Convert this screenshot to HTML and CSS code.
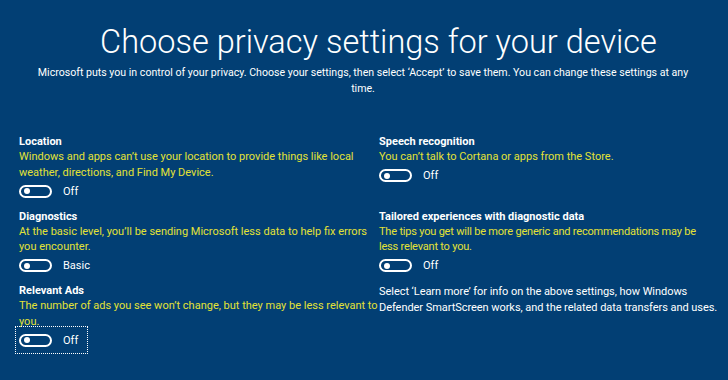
FILE: index.html
```html
<!DOCTYPE html>
<html lang="en">
<head>
    <meta charset="UTF-8">
    <title>Choose privacy settings for your device</title>
    <link rel="stylesheet" href="styles.css">
</head>
<body>
    <div class="page">
        <h1>Choose privacy settings for your device</h1>
        <p class="intro">Microsoft puts you in control of your privacy. Choose your settings, then select ‘Accept’ to save them. You can change these settings at any time.</p>

        <div class="settings">
            <div class="setting">
                <h2>Location</h2>
                <p class="desc">Windows and apps can’t use your location to provide things like local weather, directions, and Find My Device.</p>
                <div class="toggle-row">
                    <span class="toggle"></span>
                    <span class="state">Off</span>
                </div>
            </div>
            <div class="setting">
                <h2>Speech recognition</h2>
                <p class="desc">You can’t talk to Cortana or apps from the Store.</p>
                <div class="toggle-row">
                    <span class="toggle"></span>
                    <span class="state">Off</span>
                </div>
            </div>

            <div class="setting">
                <h2>Diagnostics</h2>
                <p class="desc">At the basic level, you’ll be sending Microsoft less data to help fix errors you encounter.</p>
                <div class="toggle-row">
                    <span class="toggle"></span>
                    <span class="state">Basic</span>
                </div>
            </div>
            <div class="setting">
                <h2>Tailored experiences with diagnostic data</h2>
                <p class="desc tight">The tips you get will be more generic and recommendations may be less relevant to you.</p>
                <div class="toggle-row">
                    <span class="toggle"></span>
                    <span class="state">Off</span>
                </div>
            </div>

            <div class="setting">
                <h2>Relevant Ads</h2>
                <p class="desc">The number of ads you see won’t change, but they may be less relevant to you.</p>
                <div class="toggle-row focused">
                    <span class="toggle"></span>
                    <span class="state">Off</span>
                </div>
            </div>
            <p class="note">Select ‘Learn more’ for info on the above settings, how Windows Defender SmartScreen works, and the related data transfers and uses.</p>
        </div>
    </div>
</body>
</html>
```

FILE: styles.css
```css
* {
    margin: 0;
    padding: 0;
    box-sizing: border-box;
}

body {
    font-family: Roboto, "Open Sans", sans-serif;
    background: #023f74;
    color: #ffffff;
    width: 728px;
    height: 380px;
    overflow: hidden;
}

.page {
    padding: 22px 2px 0 19px;
}

h1 {
    font-size: 32.5px;
    font-weight: 300;
    text-align: center;
    line-height: 40px;
    margin-left: 12px;
}

.intro {
    width: 664px;
    font-size: 10.6px;
    line-height: 16px;
    text-align: center;
    margin: 3px 0 0 12px;
}

.settings {
    display: grid;
    grid-template-columns: 360px 1fr;
    align-items: start;
    margin-top: 37px;
}

.setting {
    margin-bottom: 7px;
}

h2 {
    font-size: 11px;
    font-weight: 700;
    line-height: 15px;
}

.desc {
    font-size: 11px;
    line-height: 15.5px;
    color: #e2e236;
}

.desc.tight {
    max-width: 330px;
    letter-spacing: -0.2px;
}

.note {
    font-size: 11px;
    line-height: 15.5px;
    margin-top: 1px;
    letter-spacing: -0.05px;
}

.toggle-row {
    display: inline-flex;
    align-items: center;
    gap: 11px;
    height: 20px;
    margin-top: 1px;
    font-size: 11px;
}

.toggle-row.focused {
    outline: 1px dotted #ffffff;
    outline-offset: 3px;
    padding-right: 6px;
}

.toggle {
    position: relative;
    width: 33px;
    height: 13px;
    border: 2px solid #ffffff;
    border-radius: 7px;
}

.toggle::after {
    content: "";
    position: absolute;
    left: 3px;
    top: 1.5px;
    width: 6px;
    height: 6px;
    border-radius: 50%;
    background: #ffffff;
}
```
